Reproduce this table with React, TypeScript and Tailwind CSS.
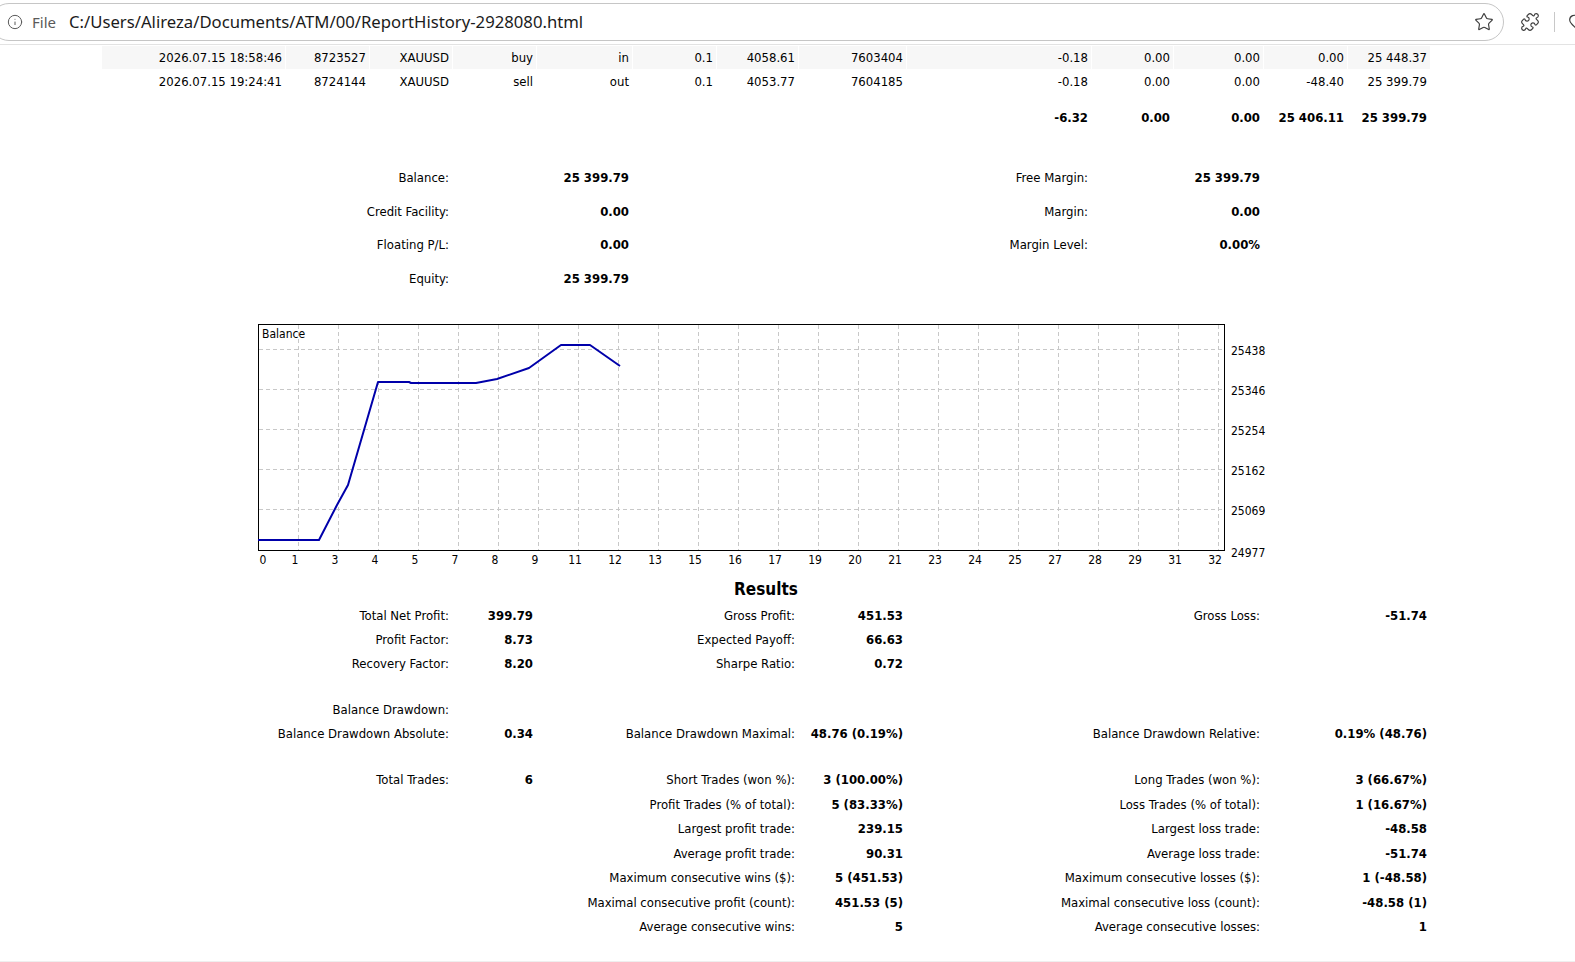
import React from 'react';
import { Info, Star, Puzzle, Heart } from 'lucide-react';

type Cell = { t?: string; s?: number; b?: boolean };

const colClasses = [
  'w-[183px]', 'w-[83px]', 'w-[82px]', 'w-[83px]', 'w-[95px]', 'w-[83px]', 'w-[81px]',
  'w-[107px]', 'w-[184px]', 'w-[81px]', 'w-[89px]', 'w-[83px]', 'w-[82px]',
];

const deal1: Cell[] = [
  { t: '2026.07.15 18:58:46' }, { t: '8723527' }, { t: 'XAUUSD' }, { t: 'buy' }, { t: 'in' },
  { t: '0.1' }, { t: '4058.61' }, { t: '7603404' }, { t: '-0.18' }, { t: '0.00' }, { t: '0.00' },
  { t: '0.00' }, { t: '25 448.37' },
];

const deal2: Cell[] = [
  { t: '2026.07.15 19:24:41' }, { t: '8724144' }, { t: 'XAUUSD' }, { t: 'sell' }, { t: 'out' },
  { t: '0.1' }, { t: '4053.77' }, { t: '7604185' }, { t: '-0.18' }, { t: '0.00' }, { t: '0.00' },
  { t: '-48.40' }, { t: '25 399.79' },
];

const totals: Cell[] = [
  { s: 8 }, { t: '-6.32', b: true }, { t: '0.00', b: true }, { t: '0.00', b: true },
  { t: '25 406.11', b: true }, { t: '25 399.79', b: true },
];

const summary: Cell[][] = [
  [{ t: 'Balance:', s: 3 }, { t: '25 399.79', s: 2, b: true }, { s: 3 }, { t: 'Free Margin:' }, { t: '25 399.79', s: 2, b: true }, { s: 2 }],
  [{ t: 'Credit Facility:', s: 3 }, { t: '0.00', s: 2, b: true }, { s: 3 }, { t: 'Margin:' }, { t: '0.00', s: 2, b: true }, { s: 2 }],
  [{ t: 'Floating P/L:', s: 3 }, { t: '0.00', s: 2, b: true }, { s: 3 }, { t: 'Margin Level:' }, { t: '0.00%', s: 2, b: true }, { s: 2 }],
  [{ t: 'Equity:', s: 3 }, { t: '25 399.79', s: 2, b: true }, { s: 8 }],
];
const summaryHeights = ['h-[32px]', 'h-[33px]', 'h-[32px]', 'h-[33px]'];

const triple = (l1: string, v1: string, l2: string, v2: string, l3?: string, v3?: string): Cell[] => [
  { t: l1, s: 3 }, { t: v1, b: true }, { t: l2, s: 3 }, { t: v2, b: true },
  ...(l3 ? [{ t: l3, s: 3 }, { t: v3, s: 2, b: true }] : [{ s: 5 }]),
];

const pair = (l2: string, v2: string, l3: string, v3: string): Cell[] => [
  { s: 4 }, { t: l2, s: 3 }, { t: v2, b: true }, { t: l3, s: 3 }, { t: v3, s: 2, b: true },
];

const results1: Cell[][] = [
  triple('Total Net Profit:', '399.79', 'Gross Profit:', '451.53', 'Gross Loss:', '-51.74'),
  triple('Profit Factor:', '8.73', 'Expected Payoff:', '66.63'),
  triple('Recovery Factor:', '8.20', 'Sharpe Ratio:', '0.72'),
];

const drawdown: Cell[][] = [
  [{ t: 'Balance Drawdown:', s: 3 }, { s: 10 }],
  triple('Balance Drawdown Absolute:', '0.34', 'Balance Drawdown Maximal:', '48.76 (0.19%)', 'Balance Drawdown Relative:', '0.19% (48.76)'),
];

const trades: Cell[][] = [
  triple('Total Trades:', '6', 'Short Trades (won %):', '3 (100.00%)', 'Long Trades (won %):', '3 (66.67%)'),
  pair('Profit Trades (% of total):', '5 (83.33%)', 'Loss Trades (% of total):', '1 (16.67%)'),
  pair('Largest profit trade:', '239.15', 'Largest loss trade:', '-48.58'),
  pair('Average profit trade:', '90.31', 'Average loss trade:', '-51.74'),
  pair('Maximum consecutive wins ($):', '5 (451.53)', 'Maximum consecutive losses ($):', '1 (-48.58)'),
  pair('Maximal consecutive profit (count):', '451.53 (5)', 'Maximal consecutive loss (count):', '-48.58 (1)'),
  pair('Average consecutive wins:', '5', 'Average consecutive losses:', '1'),
];

function Row({ cells, h, bg = '' }: { cells: Cell[]; h: string; bg?: string }) {
  return (
    <tr className={h}>
      {cells.map((c, i) => (
        <td
          key={i}
          colSpan={c.s ?? 1}
          className={`px-[3px] py-0 text-right whitespace-nowrap ${c.t ? bg : ''} ${c.b ? 'font-bold' : ''}`}
        >
          {c.t}
        </td>
      ))}
    </tr>
  );
}

function Spacer({ h }: { h: string }) {
  return (
    <tr className={h}>
      <td colSpan={13} className="p-0"></td>
    </tr>
  );
}

function BalanceChart() {
  const xs = Array.from({ length: 24 }, (_, k) => 299 + 40 * k);
  const xLabels = ['1', '3', '4', '5', '7', '8', '9', '11', '12', '13', '15', '16', '17', '19', '20', '21', '23', '24', '25', '27', '28', '29', '31', '32'];
  const ys = [349, 389, 429, 469, 509];
  const yLabels = ['25438', '25346', '25254', '25162', '25069'];
  const line = '259,540 320,540 338,505 349,485 379,382 410,382 412,383 477,383 498,379 530,368 562,345 591,345 621,366';

  return (
    <svg width={1024} height={275} viewBox="255 296 1024 275" className="block mx-auto">
      {xs.map((x) => (
        <line key={x} x1={x + 0.5} y1={325} x2={x + 0.5} y2={550} stroke="#c8c8c8" strokeDasharray="4 3" />
      ))}
      {ys.map((y) => (
        <line key={y} x1={260} y1={y + 0.5} x2={1225} y2={y + 0.5} stroke="#c8c8c8" strokeDasharray="4 3" />
      ))}
      <rect x={259.5} y={324.5} width={966} height={226} fill="none" stroke="#000" />
      <text x={263} y={338} fontSize={12} fill="#000">Balance</text>
      <polyline points={line} fill="none" stroke="#0000aa" strokeWidth={2} strokeLinejoin="round" />
      <text x={264} y={564} fontSize={12} textAnchor="middle" fill="#000">0</text>
      {xLabels.map((l, i) => (
        <text key={l} x={xs[i] - 3} y={564} fontSize={12} textAnchor="middle" fill="#000">{l}</text>
      ))}
      {yLabels.map((l, i) => (
        <text key={l} x={1232} y={ys[i] + 6} fontSize={12} fill="#000">{l}</text>
      ))}
      <text x={1232} y={557} fontSize={12} fill="#000">24977</text>
    </svg>
  );
}

function BrowserBar() {
  return (
    <div className="h-[45px] shrink-0 border-b border-[#e3e3e3] flex items-center [font-family:'Noto_Sans',sans-serif]">
      <div className="-ml-[10px] w-[1514px] h-[38px] shrink-0 rounded-full border border-[#c6c6c6] flex items-center pl-[16px] pr-[9px]">
        <Info className="w-[16px] h-[16px] text-[#5a5a5a]" strokeWidth={1.5} />
        <span className="ml-[9px] text-[15px] text-[#5a5a5a]">File</span>
        <span className="ml-[13px] text-[16.7px] text-[#1b1b1b]">C:/Users/Alireza/Documents/ATM/00/ReportHistory-2928080.html</span>
        <Star className="ml-auto w-[20px] h-[20px] text-[#3d3d3d]" strokeWidth={1.4} />
      </div>
      <Puzzle className="ml-[16px] w-[20px] h-[20px] shrink-0 text-[#3d3d3d]" strokeWidth={1.4} />
      <div className="ml-[14px] w-px h-[20px] shrink-0 bg-[#c8c8c8]" />
      <Heart className="ml-[13px] w-[20px] h-[20px] shrink-0 text-[#3d3d3d]" strokeWidth={1.4} />
    </div>
  );
}

export default function App() {
  return (
    <div className="w-[1575px] h-[962px] overflow-hidden bg-white flex flex-col">
      <BrowserBar />
      <div className="flex-1 pl-[102px] text-[13px] text-black [font-family:'DejaVu_Sans_Condensed','Liberation_Sans',sans-serif]">
        <table className="table-fixed border-separate border-spacing-[1px] w-[1330px] -ml-px">
          <colgroup>
            {colClasses.map((c, i) => (
              <col key={i} className={c} />
            ))}
          </colgroup>
          <tbody>
            <Row cells={deal1} h="h-[23px]" bg="bg-[#f7f7f7]" />
            <Row cells={deal2} h="h-[23px]" />
            <Spacer h="h-[11px]" />
            <Row cells={totals} h="h-[23px]" />
            <Spacer h="h-[31px]" />
            {summary.map((r, i) => (
              <Row key={i} cells={r} h={summaryHeights[i]} />
            ))}
            <tr>
              <td colSpan={13} className="p-0">
                <BalanceChart />
              </td>
            </tr>
            <tr className="h-[31px]">
              <td colSpan={13} className="p-0 pt-[4px] text-center font-bold text-[17px]">Results</td>
            </tr>
            {results1.map((r, i) => (
              <Row key={i} cells={r} h="h-[23px]" />
            ))}
            <Spacer h="h-[21px]" />
            {drawdown.map((r, i) => (
              <Row key={i} cells={r} h="h-[23px]" />
            ))}
            <Spacer h="h-[21px]" />
            {trades.map((r, i) => (
              <Row key={i} cells={r} h="h-[23.5px]" />
            ))}
          </tbody>
        </table>
      </div>
      <div className="h-px shrink-0 bg-[#efefef]" />
    </div>
  );
}
